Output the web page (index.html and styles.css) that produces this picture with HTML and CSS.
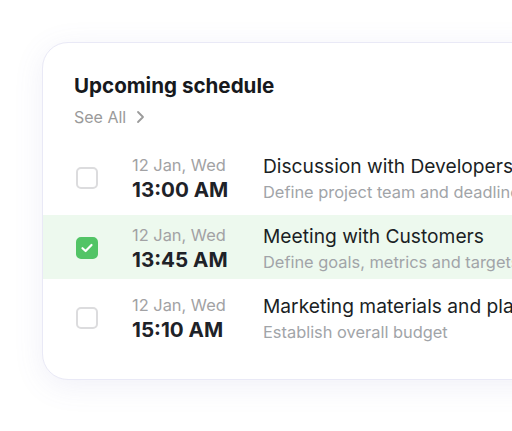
FILE: index.html
```html
<!DOCTYPE html>
<html lang="en">
<head>
    <meta charset="UTF-8">
    <title>Upcoming schedule</title>
    <link rel="stylesheet" href="styles.css">
</head>
<body>
<div class="card">
    <div class="head">
        <h2>Upcoming schedule</h2>
        <a href="javascript:;" class="see">See All
            <svg width="10" height="14" viewBox="0 0 10 14"><path d="M3 2L8 7L3 12" fill="none" stroke="#9b9b9b" stroke-width="1.8" stroke-linecap="round" stroke-linejoin="round"/></svg>
        </a>
    </div>
    <ul class="list">
        <li>
            <span class="check"></span>
            <div class="when"><p class="date">12 Jan, Wed</p><p class="time">13:00 AM</p></div>
            <div class="what"><p class="title">Discussion with Developers</p><p class="sub">Define project team and deadlines</p></div>
        </li>
        <li class="on">
            <span class="check"><svg width="14" height="12" viewBox="0 0 14 12"><path d="M2.5 6.2L5.6 9L11.5 3" fill="none" stroke="#fff" stroke-width="2.2" stroke-linecap="round" stroke-linejoin="round"/></svg></span>
            <div class="when"><p class="date">12 Jan, Wed</p><p class="time">13:45 AM</p></div>
            <div class="what"><p class="title">Meeting with Customers</p><p class="sub">Define goals, metrics and targets</p></div>
        </li>
        <li>
            <span class="check"></span>
            <div class="when"><p class="date">12 Jan, Wed</p><p class="time">15:10 AM</p></div>
            <div class="what"><p class="title">Marketing materials and plans</p><p class="sub">Establish overall budget</p></div>
        </li>
    </ul>
</div>
</body>
</html>
```

FILE: styles.css
```css
html,body{
    width: 100%;
    height: 100%;
    overflow: hidden;
}
*{
    margin: 0;
    padding: 0;
    list-style: none;
    box-sizing: border-box;
}
body{
    background: #fff;
    font-family: Inter, "Noto Sans", sans-serif;
    padding: 42px 0 0 42px;
}
a{
    text-decoration: none;
}
.card{
    width: 560px;
    background: #fff;
    border: 1px solid #e9e9f6;
    border-radius: 26px;
    box-shadow: 0 6px 30px rgba(110,110,190,0.10);
    padding: 31px 0 30px;
}
.head{
    padding-left: 31px;
}
.head h2{
    font-size: 20.6px;
    line-height: 24px;
    font-weight: 700;
    color: #17191d;
}
.see{
    display: flex;
    align-items: center;
    gap: 9px;
    margin-top: 9px;
    font-size: 16px;
    line-height: 20px;
    color: #9a9a9a;
}
.list{
    margin-top: 18px;
    display: flex;
    flex-direction: column;
    gap: 6px;
}
.list li{
    height: 64px;
    display: flex;
    align-items: center;
    padding-left: 33px;
    padding-top: 2px;
}
.list li.on{
    background: #edf9ee;
}
.check{
    width: 22px;
    height: 22px;
    border: 2px solid #dcdcde;
    border-radius: 5px;
    display: flex;
    align-items: center;
    justify-content: center;
    flex: none;
}
.on .check{
    background: #52c466;
    border-color: #52c466;
}
.when{
    width: 131px;
    margin-left: 34px;
    flex: none;
}
.date{
    font-size: 16.4px;
    line-height: 22px;
    color: #a2a2a4;
}
.time{
    font-size: 20.6px;
    line-height: 27px;
    font-weight: 700;
    color: #1e2228;
}
.what{
    white-space: nowrap;
}
.title{
    font-size: 19.2px;
    line-height: 24px;
    font-weight: 400;
    color: #1b1f25;
}
.sub{
    margin-top: 3px;
    font-size: 16.4px;
    line-height: 22px;
    color: #a1a4a8;
}
```
